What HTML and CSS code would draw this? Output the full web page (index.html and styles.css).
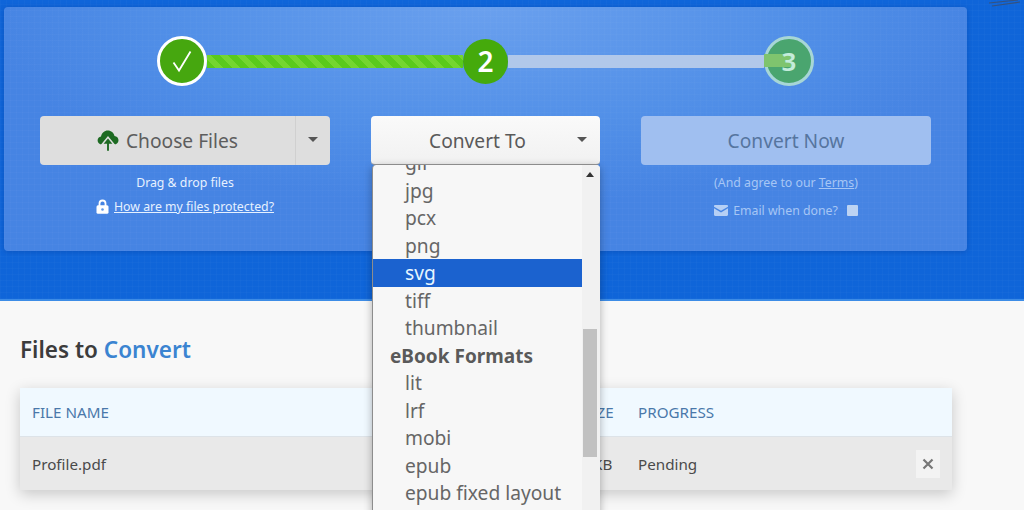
FILE: index.html
```html
<!DOCTYPE html>
<html lang="en">
<head>
  <meta charset="UTF-8" />
  <meta name="viewport" content="width=device-width, initial-scale=1.0"/>
  <title>Files to Convert</title>
  <link rel="stylesheet" href="styles.css">
</head>
<body>

  <section class="hero">
    <svg class="corner-art" width="40" height="8" viewBox="0 0 40 8">
      <path d="M5 3 L34 0 M8 6 L36 2" stroke="#35527f" stroke-width="1.2" fill="none"/>
    </svg>

    <div class="panel">
      <div class="steps">
        <div class="step step-done">
          <svg width="22" height="24" viewBox="0 0 22 24">
            <path d="M2.500 13.500 8 21.500 19.500 2.500" stroke="#fff" stroke-width="1.800" fill="none"/>
          </svg>
        </div>
        <div class="bar bar-done"></div>
        <div class="step step-now">2</div>
        <div class="bar"></div>
        <div class="step step-next"><span>3</span></div>
      </div>

      <div class="actions">
        <div class="col">
          <div class="btn choose">
            <div class="choose-main">
              <svg class="cloud" width="22" height="23" viewBox="0 0 22 23">
                <path fill="#1d6a22" d="M5 15.500C2.400 15.500.6 13.800.6 11.500c0-2.100 1.400-3.700 3.400-4C4.700 4 7.400 1.500 10.800 1.500c3.300 0 6 2.300 6.700 5.500 2.300.2 4 1.900 4 4.300 0 2.400-1.900 4.200-4.300 4.200z"/>
                <path fill="#1d6a22" stroke="#dedede" stroke-width="1.500" d="M11 8.200 17 15.500h-4.300V22.500H9.300V15.500H5z"/>
              </svg>
              Choose Files
            </div>
            <div class="choose-side"><i class="caret"></i></div>
          </div>
          <p class="note">Drag &amp; drop files</p>
          <p class="note note-link">
            <svg width="13" height="15" viewBox="0 0 13 15">
              <path fill="none" stroke="#fff" stroke-width="1.800" d="M3.500 7V4.500a3 3 0 0 1 6 0V7"/>
              <rect x="0.500" y="6.300" width="12" height="8.500" rx="1.500" fill="#fff"/>
              <circle cx="6.500" cy="10.500" r="1.300" fill="#5f97e6"/>
            </svg>
            <a href="#">How are my files protected?</a>
          </p>
        </div>

        <div class="col col-mid">
          <div class="btn convert-to">Convert To <i class="caret"></i></div>
          <div class="dropdown">
            <ul class="format-list">
              <li>gif</li>
              <li>jpg</li>
              <li>pcx</li>
              <li>png</li>
              <li class="active">svg</li>
              <li>tiff</li>
              <li>thumbnail</li>
              <li class="group">eBook Formats</li>
              <li>lit</li>
              <li>lrf</li>
              <li>mobi</li>
              <li>epub</li>
              <li>epub fixed layout</li>
            </ul>
            <div class="scrollbar">
              <i class="scroll-up"></i>
              <div class="thumb"></div>
            </div>
          </div>
        </div>

        <div class="col col-off">
          <div class="btn convert-now">Convert Now</div>
          <p class="note">(And agree to our <a href="#">Terms</a>)</p>
          <p class="note note-email">
            <svg width="14" height="11" viewBox="0 0 14 11">
              <path fill="#b5cff5" d="M0 1.200C0 .5.500 0 1.200 0h11.600c.7 0 1.200.5 1.200 1.200v.5L7 5.800 0 1.700z"/>
              <path fill="#b5cff5" d="M0 3.300 7 7.400l7-4.100v6.500c0 .7-.5 1.200-1.200 1.200H1.200C.5 11 0 10.500 0 9.800z"/>
            </svg>
            Email when done?
            <i class="checkbox"></i>
          </p>
        </div>
      </div>
    </div>
  </section>

  <section class="files">
    <h2>Files to <span>Convert</span></h2>
    <div class="file-table">
      <div class="row row-head">
        <div class="cell-name">FILE NAME</div>
        <div class="cell-size">SIZE</div>
        <div class="cell-progress">PROGRESS</div>
      </div>
      <div class="row row-file">
        <div class="cell-name">Profile.pdf</div>
        <div class="cell-size">KB</div>
        <div class="cell-progress">Pending</div>
        <div class="remove">
          <svg width="12" height="12" viewBox="0 0 12 12">
            <path d="M1.500 1.500l9 9M10.500 1.500l-9 9" stroke="#777" stroke-width="2.200" fill="none"/>
          </svg>
        </div>
      </div>
    </div>
  </section>

</body>
</html>
```
FILE: styles.css
```css
* { box-sizing: border-box; margin: 0; padding: 0; }

html, body { height: 510px; overflow: hidden; }

body {
  font-family: "Noto Sans", "Open Sans", sans-serif;
  background: #f8f8f8;
  color: #444;
}

.hero {
  position: relative;
  height: 301px;
  padding: 7px 0 0 4px;
  background-color: #0f65d9;
  background-image:
    repeating-linear-gradient(0deg, rgba(255,255,255,0.018) 0 1px, transparent 1px 6px),
    repeating-linear-gradient(90deg, rgba(255,255,255,0.018) 0 1px, transparent 1px 6px);
  border-bottom: 2px solid #3d8ce6;
}

.corner-art {
  position: absolute;
  top: 0;
  right: 0;
}

.panel {
  width: 963px;
  height: 244px;
  padding: 29px 36px 0;
  border-radius: 4px;
  background:
    repeating-linear-gradient(0deg, rgba(255,255,255,0.018) 0 1px, transparent 1px 6px),
    repeating-linear-gradient(90deg, rgba(255,255,255,0.018) 0 1px, transparent 1px 6px),
    radial-gradient(ellipse 500px 200px at 50% 0, #6aa0ee 0%, #5290e8 60%, #4684e3 100%);
  box-shadow: 0 1px 5px rgba(0, 40, 120, 0.25);
}

/* steps */
.steps {
  display: flex;
  align-items: center;
  width: 657px;
  height: 50px;
  margin-left: 117px;
}

.step {
  flex: none;
  display: flex;
  align-items: center;
  justify-content: center;
  border-radius: 50%;
  color: #fff;
  font-weight: 600;
}

.step-done {
  width: 50px;
  height: 50px;
  background: #46a70f;
  border: 3px solid #fff;
}

.step-now {
  width: 45px;
  height: 45px;
  background: #45aa0c;
  font-size: 28px;
}

.step-next {
  position: relative;
  width: 50px;
  height: 50px;
  background: #4aa56f;
  border: 3px solid #a7d6d6;
  color: #c4ecdc;
  font-size: 26px;
}

.step-next::after {
  content: "";
  position: absolute;
  left: -3px;
  top: 15px;
  width: 28px;
  height: 13px;
  background: #7fc46e;
}

.step-next span { position: relative; z-index: 1; }

.bar {
  flex: 1;
  height: 13px;
  background: #b1c8ea;
}

.bar-done {
  background: repeating-linear-gradient(45deg, #5aca1c 0 6px, #74d630 6px 12px);
}

/* the three columns */
.actions {
  display: grid;
  grid-template-columns: 290px 229px 290px;
  column-gap: 41px;
  margin-top: 30px;
}

.col { text-align: center; }
.col-mid { position: relative; }

.btn {
  height: 49px;
  border-radius: 4px;
  font-size: 19.200px;
  line-height: 50px;
}

.choose {
  display: flex;
  background: #dedede;
  color: #5d5d5d;
}

.choose-main {
  flex: 1;
  display: flex;
  align-items: center;
  justify-content: center;
  gap: 7px;
  border-right: 1px solid #d0d0d0;
}

.choose-side {
  display: flex;
  align-items: center;
  justify-content: center;
  width: 34px;
  padding-bottom: 3px;
}

.caret {
  display: inline-block;
  width: 0;
  height: 0;
  border-left: 5px solid transparent;
  border-right: 5px solid transparent;
  border-top: 5px solid #555;
}

.convert-to {
  position: relative;
  padding-right: 16px;
  background: linear-gradient(#fafafa, #f1f1f1);
  color: #5a5a5a;
  border-bottom: 1px solid #999;
}

.convert-to .caret {
  position: absolute;
  right: 13px;
  top: 21px;
}

.convert-now {
  background: #a0bff0;
  color: #56759f;
}

.note {
  margin-top: 9px;
  font-size: 12.300px;
  line-height: 17px;
  color: #e6f1ff;
}

.note a { color: inherit; }

.note-link {
  display: flex;
  align-items: center;
  justify-content: center;
  gap: 5px;
  margin-top: 7px;
}

.col-off .note { color: #a6c6f5; }

.note-email {
  display: flex;
  align-items: center;
  justify-content: center;
  gap: 5px;
  margin-top: 11px;
}

.checkbox {
  width: 11px;
  height: 11px;
  margin-left: 4px;
  background: #bcd3f3;
  border-radius: 1px;
}

/* open format list */
.dropdown {
  position: absolute;
  left: 1px;
  top: 49px;
  z-index: 5;
  display: flex;
  width: 228px;
  height: 360px;
  overflow: hidden;
  background: #f7f7f7;
  border-left: 1px solid #8d8d8d;
  border-radius: 4px 4px 0 0;
  box-shadow: 0 2px 8px rgba(0, 0, 0, 0.3);
  text-align: left;
}

.format-list {
  flex: 1;
  margin-top: -16px;
  list-style: none;
  font-size: 19.200px;
  line-height: 27.500px;
  color: #666;
}

.format-list li { padding-left: 32px; }

.format-list .active {
  background: #1b62cf;
  color: #e6f6ff;
}

.format-list .group {
  height: 27.500px;
  padding-top: 1px;
  padding-left: 17px;
  font-size: 19px;
  font-weight: 700;
  color: #5a5a5a;
}

.scrollbar {
  position: relative;
  flex: none;
  width: 18px;
  background: #f1f1f1;
}

.scroll-up {
  position: absolute;
  left: 4px;
  top: 7px;
  border-left: 4px solid transparent;
  border-right: 4px solid transparent;
  border-bottom: 5px solid #333;
}

.thumb {
  width: 14px;
  height: 128px;
  margin: 164px 0 0 1px;
  background: #c1c1c1;
}

/* file table */
.files { padding: 31px 72px 0 20px; }

.files h2 {
  font-size: 22.500px;
  font-weight: 600;
  line-height: 36px;
  color: #3c3c3c;
}

.files h2 span { color: #3b84d1; }

.file-table {
  margin-top: 20px;
  box-shadow: 0 4px 14px rgba(0, 0, 0, 0.2);
}

.row {
  display: flex;
  align-items: center;
  padding-left: 12px;
  font-size: 15.200px;
}

.row-head {
  height: 49px;
  background: #f0f9ff;
  border-bottom: 1px solid #dde3e8;
  color: #4a78aa;
}

.row-file {
  height: 53px;
  padding-top: 1px;
  background: #e9e9e9;
  color: #4a4a4a;
}

.cell-name { width: 551px; }
.cell-size { width: 55px; }
.cell-progress { flex: 1; }
.row-file .cell-size { padding-left: 10px; }

.remove {
  display: flex;
  align-items: center;
  justify-content: center;
  width: 24px;
  height: 28px;
  margin-right: 12px;
  background: #f3f3f3;
}
```
